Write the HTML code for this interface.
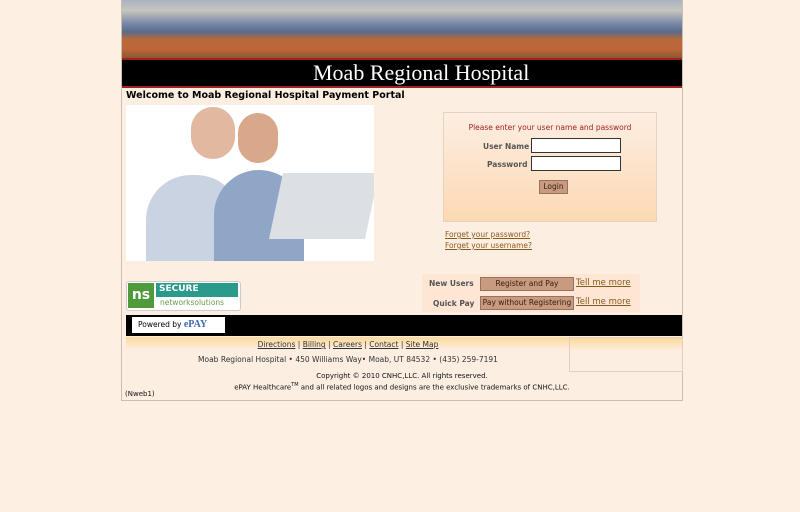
<!DOCTYPE html>
<html><head><style>
body{margin:0;background:#fdefe2;font-family:"DejaVu Sans",sans-serif;width:800px;height:512px;position:relative;overflow:hidden}
.a{position:absolute;white-space:nowrap}
#wrap{left:121px;top:0;width:560px;height:400px;border:1px solid #cbbdb2;border-top:none;background:#fdeee2}
.lnk{color:#8a5a1c;text-decoration:underline;font-size:7.5px}
.btn{background:#c89a80;border:1px solid #9a7060;font-size:7.5px;color:#3a2010;text-align:center;line-height:12px}
</style></head><body>
<div id="wrap" class="a">
 <div class="a" style="left:0;top:0;width:560px;height:58px;background:linear-gradient(180deg,#a9b3c1 0%,#c7c6bf 18%,#7a8aa8 40%,#5a6a8c 55%,#b86a3a 68%,#c0643a 85%,#8a5a30 100%)"></div>
 <div class="a" style="left:0;top:58px;width:560px;height:30px;background:#000;border-top:2px solid #a2231d;border-bottom:2px solid #a2231d;box-sizing:border-box"></div>
 <div class="a" style="left:191px;top:60px;color:#fff;font-family:'Liberation Serif',serif;font-size:22px;line-height:26px">Moab Regional Hospital</div>
 <div class="a" style="left:4px;top:90px;font-size:9.5px;font-weight:bold;color:#000">Welcome to Moab Regional Hospital Payment Portal</div>
 <div class="a" style="left:4px;top:105px;width:248px;height:156px;background:#fff;overflow:hidden">
  <div class="a" style="left:20px;top:70px;width:95px;height:90px;border-radius:45px 45px 0 0;background:#c9d3e2"></div>
  <div class="a" style="left:88px;top:65px;width:90px;height:95px;border-radius:45px 45px 0 0;background:#8fa6c6"></div>
  <div class="a" style="left:65px;top:2px;width:44px;height:52px;border-radius:22px;background:#e2b9a0"></div>
  <div class="a" style="left:112px;top:8px;width:40px;height:50px;border-radius:20px;background:#d9a78a"></div>
  <div class="a" style="left:150px;top:68px;width:96px;height:66px;background:#dcdfe4;transform:skewX(-12deg)"></div>
 </div>
 <div class="a" style="left:321px;top:112px;width:212px;height:108px;border:1px solid #e5d2c0;background:linear-gradient(#fdeee2,#fcd9b4)"></div>
 <div class="a" style="left:322px;top:123px;width:212px;text-align:center;font-size:7.5px;color:#a2231d">Please enter your user name and password</div>
 <div class="a" style="left:361px;top:142px;font-size:7.5px;font-weight:bold;color:#555">User Name</div>
 <div class="a" style="left:365px;top:160px;font-size:7.5px;font-weight:bold;color:#555">Password</div>
 <div class="a" style="left:409px;top:138px;width:88px;height:13px;background:#fff;border:1px solid #333"></div>
 <div class="a" style="left:409px;top:156px;width:88px;height:13px;background:#fff;border:1px solid #333"></div>
 <div class="a btn" style="left:417px;top:180px;width:27px;height:12px">Login</div>
 <div class="a lnk" style="left:323px;top:230px">Forget your password?</div>
 <div class="a lnk" style="left:323px;top:241px">Forget your username?</div>
 <div class="a" style="left:300px;top:274px;width:218px;height:38px;background:#fde6d3"></div>
 <div class="a" style="left:307px;top:279px;font-size:7.5px;font-weight:bold;color:#555">New Users</div>
 <div class="a" style="left:311px;top:299px;font-size:7.5px;font-weight:bold;color:#555">Quick Pay</div>
 <div class="a btn" style="left:358px;top:277px;width:92px;height:12px">Register and Pay</div>
 <div class="a btn" style="left:358px;top:296px;width:92px;height:12px;overflow:hidden">Pay without Registering</div>
 <div class="a lnk" style="left:454px;top:278px;font-size:8.5px">Tell me more</div>
 <div class="a lnk" style="left:454px;top:297px;font-size:8.5px">Tell me more</div>
 <div class="a" style="left:4px;top:281px;width:113px;height:28px;border:1px solid #ccc;border-radius:3px;background:#fff"></div>
 <div class="a" style="left:6px;top:283px;width:26px;height:25px;background:#4f9a3a;color:#fff;font-size:14px;font-weight:bold;text-align:center;line-height:25px">ns</div>
 <div class="a" style="left:34px;top:283px;width:82px;height:14px;background:#2a9a8a;color:#fff;font-size:9px;font-weight:bold;line-height:12px;padding-left:3px;box-sizing:border-box">SECURE</div>
 <div class="a" style="left:38px;top:298px;font-size:7.5px;color:#6a9a4a">networksolutions</div>
 <div class="a" style="left:4px;top:315px;width:556px;height:21px;background:#000"></div>
 <div class="a" style="left:10px;top:317px;width:93px;height:16px;background:#fff;font-size:7.5px;line-height:16px;padding-left:6px;box-sizing:border-box">Powered by <b style="color:#3a6ab0;font-family:'Liberation Serif',serif;font-size:10px">ePAY</b></div>
 <div class="a" style="left:4px;top:337px;width:556px;height:33px;background:linear-gradient(#fcd99a,#fdeee2 40%)"></div>
 <div class="a" style="left:447px;top:337px;width:112px;height:33px;border:1px solid #e0d0c0;background:linear-gradient(#fcd99a,#fdeee2 40%)"></div>
 <div class="a" style="left:4px;top:340px;width:444px;text-align:center;font-size:7.5px;color:#333"><u>Directions</u> | <u>Billing</u> | <u>Careers</u> | <u>Contact</u> | <u>Site Map</u></div>
 <div class="a" style="left:4px;top:355px;width:444px;text-align:center;font-size:7.5px;color:#333">Moab Regional Hospital • 450 Williams Way• Moab, UT 84532 • (435) 259-7191</div>
 <div class="a" style="left:0;top:372px;width:560px;text-align:center;font-size:7px;color:#111;line-height:9px">Copyright © 2010 CNHC,LLC. All rights reserved.<br>ePAY Healthcare<sup style="font-size:5px">TM</sup> and all related logos and designs are the exclusive trademarks of CNHC,LLC.</div>
 <div class="a" style="left:3px;top:390px;font-size:7px;color:#111">(Nweb1)</div>
</div>
</body></html>
